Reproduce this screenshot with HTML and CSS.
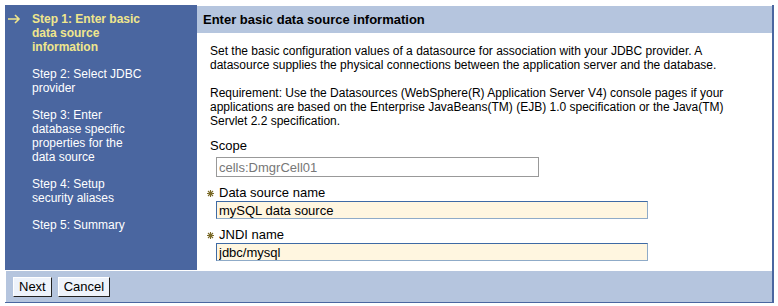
FILE: index.html
```html
<!DOCTYPE html>
<html lang="en">
<head>
  <meta charset="UTF-8">
  <title>Create data source</title>
  <link rel="stylesheet" href="styles.css">
</head>
<body>
  <div class="wizard">
    <div class="main">
      <ul class="steps">
        <li class="step current">
          <svg class="arrow" width="13" height="10" viewBox="0 0 13 10"><path d="M0 5h11M7 1l4 4-4 4" fill="none" stroke="#f0e68c" stroke-width="1.6"/></svg>
          Step 1: Enter basic data source information
        </li>
        <li class="step">Step 2: Select JDBC provider</li>
        <li class="step">Step 3: Enter database specific properties for the data source</li>
        <li class="step">Step 4: Setup security aliases</li>
        <li class="step">Step 5: Summary</li>
      </ul>
      <div class="content">
        <h3 class="title">Enter basic data source information</h3>
        <div class="body">
          <p>Set the basic configuration values of a datasource for association with your JDBC provider. A datasource supplies the physical connections between the application server and the database.</p>
          <p>Requirement: Use the Datasources (WebSphere(R) Application Server V4) console pages if your applications are based on the Enterprise JavaBeans(TM) (EJB) 1.0 specification or the Java(TM) Servlet 2.2 specification.</p>
          <div class="field scope">
            <label>Scope</label>
            <input type="text" class="readonly" value="cells:DmgrCell01" readonly>
          </div>
          <div class="field">
            <label><svg class="req" width="7" height="7" viewBox="0 0 7 7"><path d="M3.5 0v7M0 3.5h7M1 1l5 5M6 1l-5 5" stroke="#7a6a28" stroke-width="1.1"/></svg>Data source name</label>
            <input type="text" value="mySQL data source">
          </div>
          <div class="field">
            <label><svg class="req" width="7" height="7" viewBox="0 0 7 7"><path d="M3.5 0v7M0 3.5h7M1 1l5 5M6 1l-5 5" stroke="#7a6a28" stroke-width="1.1"/></svg>JNDI name</label>
            <input type="text" value="jdbc/mysql">
          </div>
        </div>
      </div>
    </div>
    <div class="footer">
      <button>Next</button>
      <button>Cancel</button>
    </div>
  </div>
</body>
</html>
```
FILE: styles.css
```css
body {
  margin: 0;
  background: #fff;
  font-family: 'Liberation Sans', Arial, sans-serif;
  font-size: 12px;
  color: #000;
}
.wizard {
  margin: 5px 0 0 5px;
  width: 767px;
  border-right: 2px solid #4a66a0;
  border-bottom: 1px solid #4a66a0;
}
.main {
  display: flex;
  height: 265px;
}
.steps {
  list-style: none;
  margin: 0;
  padding: 7px 0 0 0;
  width: 192px;
  flex: none;
  background: #4a66a0;
}
.step {
  position: relative;
  padding: 0 52px 0 27px;
  margin-bottom: 13px;
  line-height: 14px;
  color: #fff;
}
.step.current {
  color: #f0e68c;
  font-weight: bold;
}
.arrow {
  position: absolute;
  left: 3px;
  top: 2px;
}
.content {
  flex: 1;
  display: flex;
  flex-direction: column;
}
.title {
  margin: 1px 0 0 0;
  height: 27px;
  line-height: 27px;
  padding-left: 6px;
  background: #b5c5de;
  font-size: 13px;
  font-weight: bold;
}
.body {
  padding: 11px 13px 0 13px;
}
.body p {
  margin: 0 0 14px 0;
  line-height: 14px;
}
.field {
  display: flex;
  flex-direction: column;
  margin-top: 8px;
}
.field.scope {
  margin-top: -4px;
}
.field label {
  display: flex;
  align-items: center;
  margin-left: -3px;
  line-height: 16px;
  font-size: 13px;
}
.scope label {
  margin-left: 0;
}
.req {
  margin-right: 5px;
}
.field input {
  margin: 0 0 0 6px;
  width: 432px;
  height: 18px;
  box-sizing: border-box;
  padding: 0 2px;
  font-family: 'Liberation Sans', Arial, sans-serif;
  font-size: 13px;
  color: #000;
  background: #fff6e0;
  border: 1px solid #8fabc8;
  border-top-color: #3e6aa5;
  border-left-color: #3e6aa5;
  outline: none;
}
.scope input {
  width: 323px;
  height: 20px;
  margin-top: 3px;
  background: #fff;
  border: 1px solid #999;
  color: #777;
}
.footer {
  display: flex;
  gap: 6px;
  align-items: center;
  height: 32px;
  padding-left: 7px;
  box-sizing: border-box;
  background: #b5c5de;
  border-top: 1px solid #fff;
  border-left: 1px solid #fff;
}
.footer button {
  height: 20px;
  padding: 0 5px;
  font-family: 'Liberation Sans', Arial, sans-serif;
  font-size: 13px;
  color: #000;
  background: #eef3fb;
  border: 1px solid #fff;
  border-right-color: #222;
  border-bottom-color: #222;
}
```
